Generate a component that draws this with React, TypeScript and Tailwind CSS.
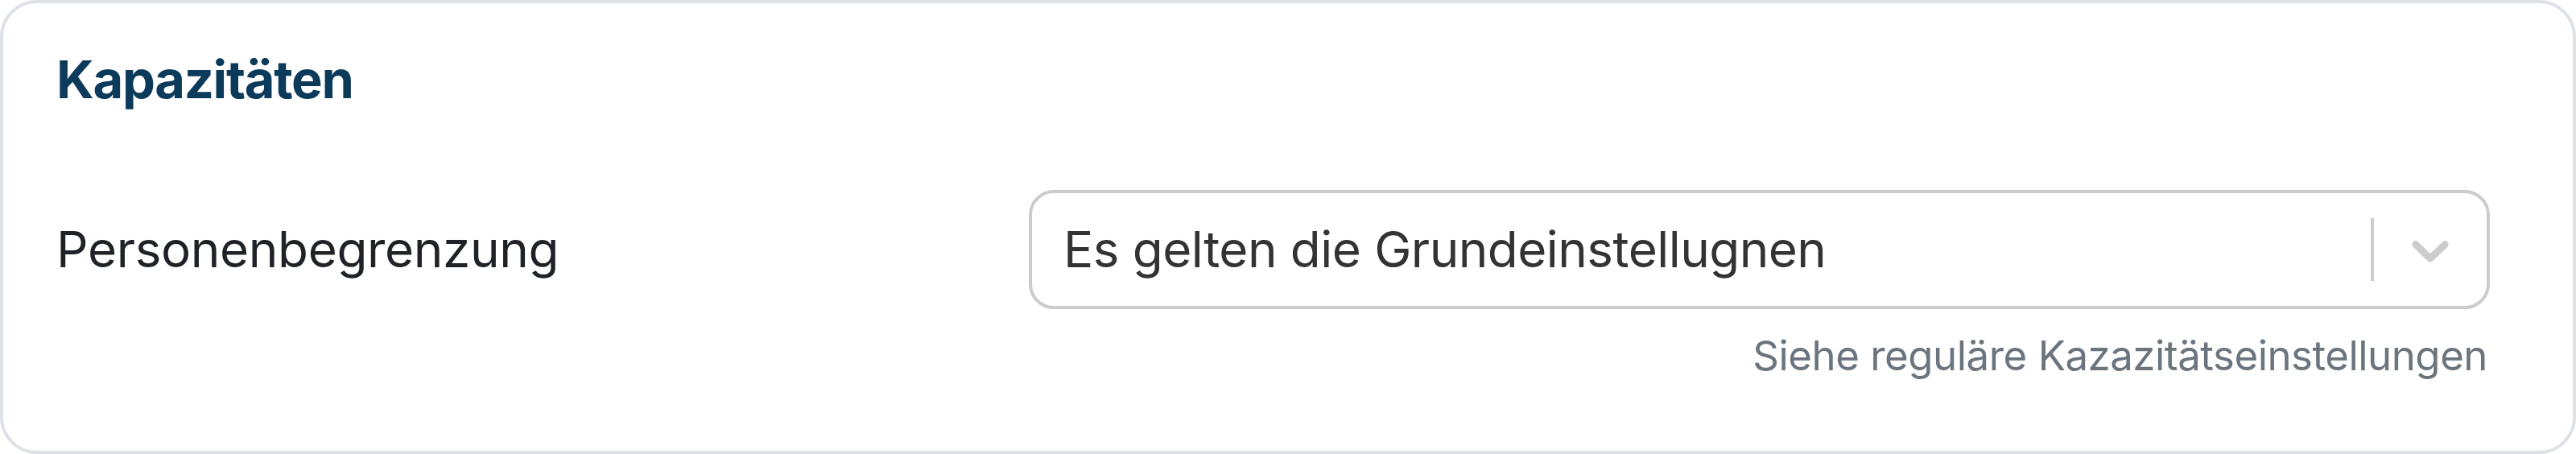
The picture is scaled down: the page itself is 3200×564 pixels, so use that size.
import React from "react";

function Chevron() {
  return (
    <svg viewBox="0 0 20 20" className="h-[78px] w-[78px]" fill="#cccccc" aria-hidden="true">
      <path d="M4.516 7.548c0.436-0.446 1.043-0.481 1.576 0l3.908 3.747 3.908-3.747c0.533-0.481 1.141-0.446 1.574 0 0.436 0.445 0.408 1.197 0 1.615-0.406 0.418-4.695 4.502-4.695 4.502-0.217 0.223-0.502 0.335-0.787 0.335s-0.57-0.112-0.789-0.335c0 0-4.287-4.084-4.695-4.502s-0.436-1.17 0-1.615z" />
    </svg>
  );
}

export default function App() {
  const font = { fontFamily: "Inter, 'Noto Sans', 'Liberation Sans', sans-serif" };
  return (
    <div className="w-[3200px] h-[564px] bg-white" style={font}>
      <div className="h-full w-full rounded-[46px] border-[4px] border-[#dee2e6] bg-white pl-[66px] pr-[103px] pt-[62px] flex flex-col">
        <h2 className="text-[65px] leading-[66px] font-bold text-[#0c3a5b] tracking-[-0.02em]">
          Kapazitäten
        </h2>

        <div className="mt-[104px] flex items-center">
          <div className="flex-1 text-[62px] leading-[62px] text-[#1f2327] tracking-[-0.006em]">
            Personenbegrenzung
          </div>
          <div className="w-[1815px] h-[148px] rounded-[31px] border-[4px] border-[#cccccc] bg-white flex items-center">
            <div className="flex-1 pl-[39px] text-[62px] leading-[62px] text-[#333333] tracking-[-0.009em]">
              Es gelten die Grundeinstellugnen
            </div>
            <div className="flex items-stretch self-stretch">
              <span className="my-[31px] w-[4px] bg-[#cccccc]" />
              <div className="flex items-center px-[31px]">
                <Chevron />
              </div>
            </div>
          </div>
        </div>

        <div className="mt-[32px] flex justify-end pr-[3px]">
          <span className="text-[51px] leading-[51px] text-[#6c757d] tracking-[-0.01em]">
            Siehe reguläre Kazazitätseinstellungen
          </span>
        </div>
      </div>
    </div>
  );
}
